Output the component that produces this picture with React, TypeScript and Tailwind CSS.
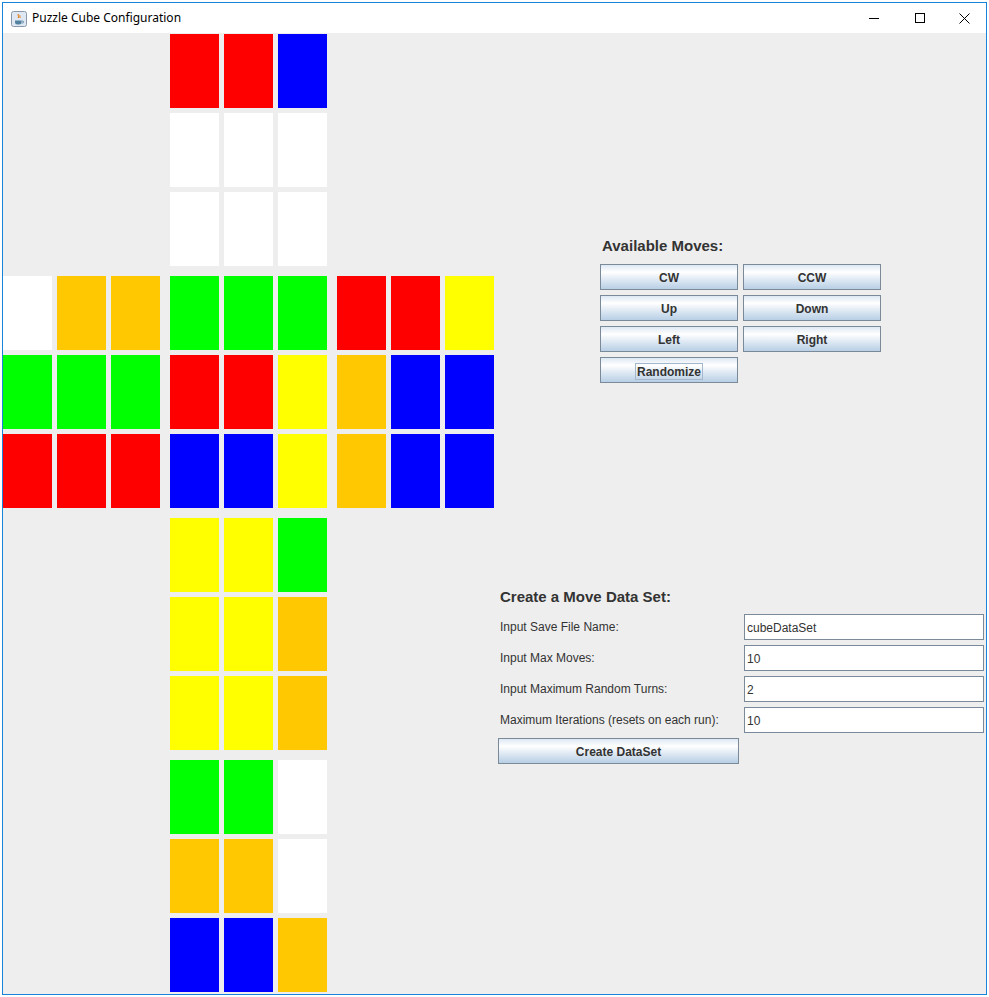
const W = '#ffffff'
const R = '#ff0000'
const G = '#00ff00'
const B = '#0000ff'
const Y = '#ffff00'
const O = '#ffc800'

type Face = string[][]

const faces: { pos: string; cells: Face }[] = [
  { pos: 'col-start-2 row-start-1', cells: [[R, R, B], [W, W, W], [W, W, W]] },
  { pos: 'col-start-1 row-start-2', cells: [[W, O, O], [G, G, G], [R, R, R]] },
  { pos: 'col-start-2 row-start-2', cells: [[G, G, G], [R, R, Y], [B, B, Y]] },
  { pos: 'col-start-3 row-start-2', cells: [[R, R, Y], [O, B, B], [O, B, B]] },
  { pos: 'col-start-2 row-start-3', cells: [[Y, Y, G], [Y, Y, O], [Y, Y, O]] },
  { pos: 'col-start-2 row-start-4', cells: [[G, G, W], [O, O, W], [B, B, O]] },
]

const btnClass =
  'h-[26px] border border-[#7a8a99] bg-[linear-gradient(to_bottom,#dde8f3_0%,#ffffff_30%,#dde8f3_62%,#b8cfe5_100%)] text-[12px] font-bold text-[#333333] flex items-center justify-center leading-none pt-[2px]'

const fieldClass =
  'h-[26px] border border-[#7a8a99] bg-white px-[2px] pt-[2px] text-[12px] text-[#333333] flex items-center'

function JavaIcon() {
  return (
    <svg width="16" height="16" viewBox="0 0 16 16">
      <rect x="0.5" y="0.5" width="15" height="15" rx="2" fill="#dfe8f2" stroke="#8a99aa" />
      <path d="M4 9.5 h6.5 v1.5 a2.5 2.5 0 0 1 -2.5 2.5 h-1.5 a2.5 2.5 0 0 1 -2.5 -2.5 z" fill="#5382a1" />
      <path d="M10.5 10 h1 a1 1 0 0 1 0 2 h-1" fill="none" stroke="#5382a1" strokeWidth="0.9" />
      <path d="M7.5 3 c-1.5 1.5 1 2 -0.3 4 M9 4.2 c-1 1 0.8 1.4 -0.2 2.8" fill="none" stroke="#e76f00" strokeWidth="1" />
    </svg>
  )
}

function CubeFace({ cells }: { cells: Face }) {
  return (
    <div className="grid grid-cols-[49px_49px_49px] grid-rows-[74px_74px_74px] gap-[5px]">
      {cells.flat().map((c, i) => (
        <div key={i} style={{ backgroundColor: c }} />
      ))}
    </div>
  )
}

export default function App() {
  return (
    <div className="w-[989px] h-[997px] bg-white pl-[2px] pt-[2px] overflow-hidden font-['Liberation_Sans',Arial,sans-serif]">
      <div className="w-[985px] h-[993px] border border-[#1883d7] flex flex-col">
        {/* title bar */}
        <div className="h-[30px] bg-white flex items-center shrink-0">
          <div className="ml-[8px] mt-[1px]">
            <JavaIcon />
          </div>
          <span className="ml-[5px] text-[12px] text-black font-['Noto_Sans','Liberation_Sans',sans-serif] leading-none">
            Puzzle Cube Configuration
          </span>
          <div className="ml-auto flex items-center h-full">
            <div className="w-[46px] h-full flex items-center justify-center">
              <div className="w-[10px] h-px bg-black" />
            </div>
            <div className="w-[46px] h-full flex items-center justify-center">
              <div className="w-[10px] h-[10px] border border-black" />
            </div>
            <div className="w-[43px] h-full flex items-center justify-center">
              <svg width="11" height="11" viewBox="0 0 11 11">
                <path d="M0.5 0.5 L10.5 10.5 M10.5 0.5 L0.5 10.5" stroke="#000" strokeWidth="1" />
              </svg>
            </div>
          </div>
        </div>

        {/* content */}
        <div className="flex-1 bg-[#eeeeee] flex overflow-hidden">
          <div className="pt-[1px] shrink-0">
            <div className="grid grid-cols-[157px_157px_157px] grid-rows-[232px_232px_232px_232px] gap-[10px]">
              {faces.map((f, i) => (
                <div key={i} className={f.pos}>
                  <CubeFace cells={f.cells} />
                </div>
              ))}
            </div>
          </div>

          <div className="flex flex-col">
            {/* moves */}
            <div className="ml-[106px] mt-[204px]">
              <div className="ml-[2px] text-[15px] font-bold leading-[17px] text-[#333333]">Available Moves:</div>
              <div className="mt-[10px] grid grid-cols-[138px_138px] gap-[5px]">
                <button className={btnClass}>CW</button>
                <button className={btnClass}>CCW</button>
                <button className={btnClass}>Up</button>
                <button className={btnClass}>Down</button>
                <button className={btnClass}>Left</button>
                <button className={btnClass}>Right</button>
                <button className={btnClass}>
                  <span className="border border-[#a3b8cc] px-[1px] pt-[2px] pb-[1px]">Randomize</span>
                </button>
              </div>
            </div>

            {/* data set */}
            <div className="ml-[4px] mt-[205px]">
              <div className="ml-[2px] text-[15px] font-bold leading-[17px] text-[#333333]">Create a Move Data Set:</div>
              <div className="mt-[9px] grid grid-cols-[246px_240px] gap-y-[5px] items-center">
                <span className="ml-[2px] text-[12px] text-[#333333]">Input Save File Name:</span>
                <div className={fieldClass}>cubeDataSet</div>
                <span className="ml-[2px] text-[12px] text-[#333333]">Input Max Moves:</span>
                <div className={fieldClass}>10</div>
                <span className="ml-[2px] text-[12px] text-[#333333]">Input Maximum Random Turns:</span>
                <div className={fieldClass}>2</div>
                <span className="ml-[2px] text-[12px] text-[#333333]">Maximum Iterations (resets on each run):</span>
                <div className={fieldClass}>10</div>
              </div>
              <button className={`${btnClass} w-[241px] mt-[5px]`}>Create DataSet</button>
            </div>
          </div>
        </div>
      </div>
    </div>
  )
}
